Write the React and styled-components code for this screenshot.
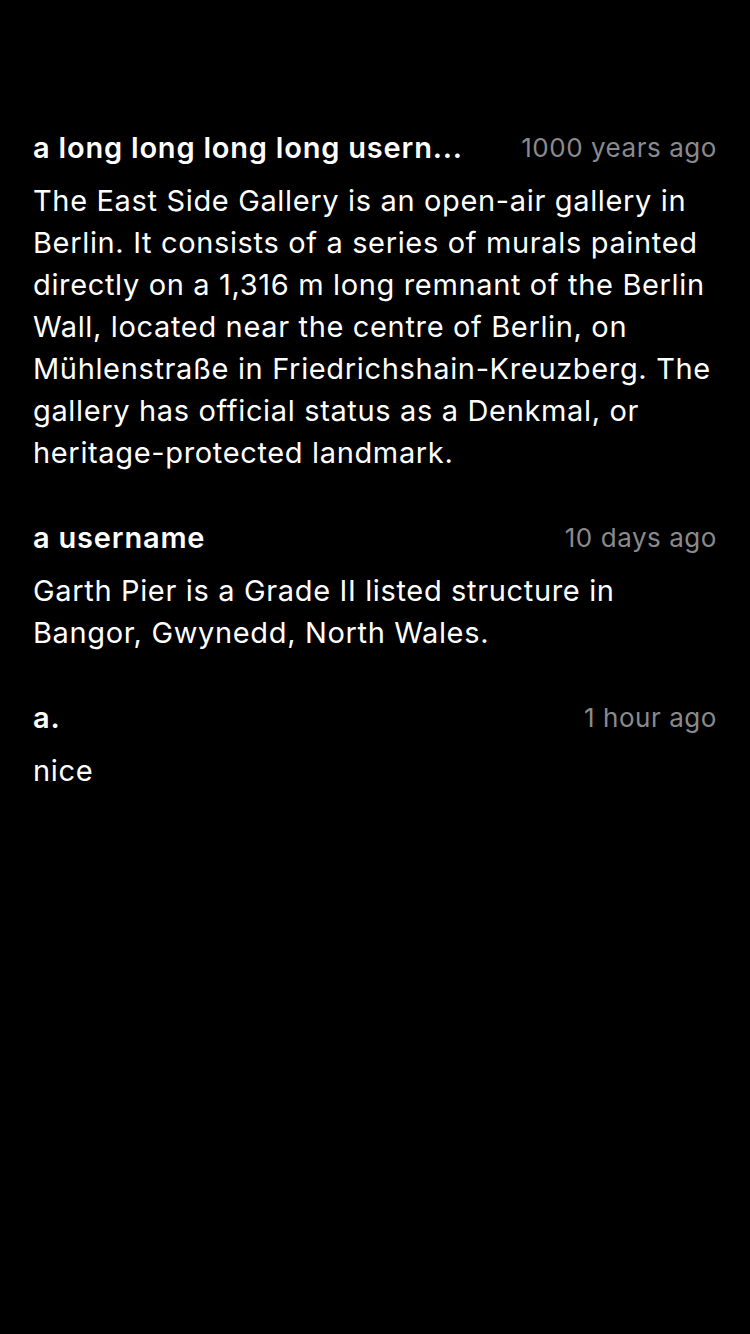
import React from "react";
import styled, { createGlobalStyle } from "styled-components";

const GlobalStyle = createGlobalStyle`
  html, body {
    margin: 0;
    padding: 0;
    background: #000;
  }
  body {
    font-family: Inter, "Noto Sans", "Liberation Sans", sans-serif;
    -webkit-font-smoothing: antialiased;
  }
`;

const comments = [
  {
    id: 1,
    username: "a long long long long usern...",
    time: "1000 years ago",
    text: "The East Side Gallery is an open-air gallery in Berlin. It consists of a series of murals painted directly on a 1,316 m long remnant of the Berlin Wall, located near the centre of Berlin, on Mühlenstraße in Friedrichshain-Kreuzberg. The gallery has official status as a Denkmal, or heritage-protected landmark.",
  },
  {
    id: 2,
    username: "a username",
    time: "10 days ago",
    text: "Garth Pier is a Grade II listed structure in Bangor, Gwynedd, North Wales.",
  },
  {
    id: 3,
    username: "a.",
    time: "1 hour ago",
    text: "nice",
  },
];

function App() {
  return (
    <>
      <GlobalStyle />
      <Page>
        <CommentList>
          {comments.map((c) => (
            <Comment key={c.id}>
              <Header>
                <Username>{c.username}</Username>
                <Time>{c.time}</Time>
              </Header>
              <Body>{c.text}</Body>
            </Comment>
          ))}
        </CommentList>
      </Page>
    </>
  );
}

export default App;

const Page = styled.div`
  min-height: 1334px;
  background: #000;
  padding: 126px 33px 0 33px;
  box-sizing: border-box;
`;

const CommentList = styled.div`
  display: flex;
  flex-direction: column;
  gap: 42px;
`;

const Comment = styled.div`
  display: flex;
  flex-direction: column;
  gap: 12px;
`;

const Header = styled.div`
  display: flex;
  align-items: center;
  justify-content: space-between;
  height: 42px;
`;

const Username = styled.div`
  flex: 1;
  min-width: 0;
  margin-right: 30px;
  color: #fff;
  font-size: 29px;
  font-weight: 600;
  letter-spacing: 0.8px;
  white-space: nowrap;
`;

const Time = styled.div`
  flex-shrink: 0;
  color: #8a8a8e;
  font-size: 26px;
  letter-spacing: 0.55px;
  white-space: nowrap;
`;

const Body = styled.p`
  margin: 0;
  color: #fff;
  font-size: 29px;
  letter-spacing: 0.65px;
  line-height: 42px;
`;
